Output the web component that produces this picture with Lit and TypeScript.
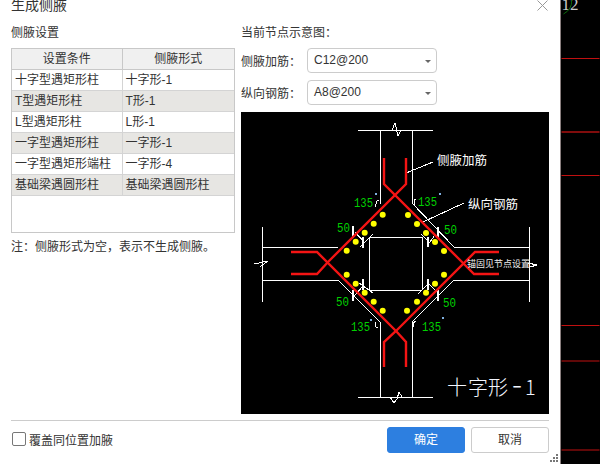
import { LitElement, html, css, svg } from "lit";
import { customElement } from "lit/decorators.js";

const rows = [
  ["十字型遇矩形柱", "十字形-1"],
  ["T型遇矩形柱", "T形-1"],
  ["L型遇矩形柱", "L形-1"],
  ["一字型遇矩形柱", "一字形-1"],
  ["一字型遇矩形端柱", "一字形-4"],
  ["基础梁遇圆形柱", "基础梁遇圆形柱"],
];

const whiteLines = [
  "358,130 433,130", "380,130 380,204", "412,130 412,203",
  "262,227 262,302", "262,247 338,247", "262,280 338,280",
  "338,280 380,322", "380,322 380,397", "358,397 433,397",
  "412,397 412,322", "412,322 454,280", "454,280 529,280",
  "529,227 529,302", "529,247 454,247", "454,247 412,203",
  "369,237 422,237", "369,237 369,290", "422,237 422,290", "369,290 422,290",
  "355,232 364,242", "360,247 373,234", "421,234 430,243", "427,246 435,235",
  "359,283 373,293", "354,296 364,285", "418,294 429,283", "427,282 437,292",
  "392,130 395,123 398,136 401,130", "390,397 394,403 397,399 399,392 402,397",
  "254,264 268,261 260,267", "262,260 262,268",
  "528,263 537,265 530,267",
  "406,173 433,162", "423,222 464,203",
  "375,207 377,201 379,200", "414,200 416,199", "414,200 414,205 416,207",
  "375,322 376,327 378,328", "413,327 413,323 416,321",
];
const thick = [
  "353,226 353,238", "363,237 363,248", "438,227 438,238", "428,237 428,247",
  "353,290 353,301", "363,279 363,290", "428,279 428,290", "438,290 438,301",
];
const red = [
  "406,158 406,184 328,262 317,274 291,274",
  "384,158 384,184 463,263 474,274 499,274",
  "291,252 317,252 396,331 406,342 406,367",
  "499,252 475,252 396,331 384,342 384,367",
];
const dots = [
  [346.7, 250.7], [355.7, 241.7], [364.7, 232.7], [373.7, 223.7], [382.7, 214.7],
  [408, 215], [417, 224], [426, 233], [435, 242], [444, 251],
  [346.7, 274.7], [355.7, 283.7], [364.7, 292.7], [373.7, 301.7], [382.7, 310.7],
  [444, 274.7], [435, 283.7], [426, 292.7], [417, 301.7], [407, 310.7],
];
const green: [number, number, string, number][] = [
  [354, 207, "135", 19], [418, 206, "135", 19], [351, 331, "135", 19], [422, 331, "135", 19],
  [337, 232, "50", 13], [444, 234, "50", 13], [336, 306, "50", 13], [443, 307, "50", 13],
];
const degs = [[375, 193], [439, 193], [370, 319], [442, 317]];

@customElement("app-root")
export class AppRoot extends LitElement {
  static styles = css`
    :host {
      display: flex;
      width: 600px;
      height: 464px;
      overflow: hidden;
      background: #000;
      font-family: "Liberation Sans", "Noto Sans CJK SC", sans-serif;
      font-size: 12px;
      color: #333;
    }
    .dialog {
      position: relative;
      width: 561px;
      height: 464px;
      box-sizing: border-box;
      padding: 0 12px 0 11px;
      background: #fff;
      border-right: 1px solid #8a7f7f;
      display: flex;
      flex-direction: column;
    }
    .title {
      height: 11px;
      line-height: 11px;
      font-size: 14px;
    }
    .close {
      position: absolute;
      left: 537px;
      top: 0;
      width: 11px;
      height: 11px;
      display: block;
    }
    .grip {
      position: absolute;
      left: 550px;
      top: 454px;
      width: 9px;
      height: 9px;
      display: block;
    }
    .main {
      display: flex;
      height: 403px;
    }
    .left {
      width: 224px;
      margin-right: 6px;
      padding-top: 16px;
    }
    .section {
      height: 12px;
      line-height: 12px;
      margin-bottom: 9px;
    }
    .tablebox {
      height: 185px;
      box-sizing: border-box;
      border: 1px solid #c8c8c8;
    }
    table {
      border-collapse: collapse;
      table-layout: fixed;
      width: 222px;
    }
    th, td {
      height: 20px;
      padding: 0 0 0 3px;
      box-sizing: border-box;
      border: 1px solid #d4d4d4;
      font-weight: 400;
      text-align: left;
      white-space: nowrap;
      overflow: hidden;
      line-height: 20px;
    }
    tr > :first-child { border-left: 0; width: 110px; }
    tr > :last-child { border-right: 0; }
    thead tr:first-child th { border-top: 0; }
    th {
      text-align: center;
      background: #f0f0f0;
      border-color: #c8c8c8;
      padding: 0;
    }
    tbody tr:nth-child(even) td { background: #e7e6e3; }
    .note {
      margin-top: 7px;
      line-height: 14px;
      white-space: nowrap;
    }
    .right {
      width: 308px;
      padding-top: 16px;
      display: flex;
      flex-direction: column;
    }
    .rlabel {
      height: 12px;
      line-height: 12px;
      margin-bottom: 9px;
    }
    .field {
      display: flex;
      align-items: center;
      height: 25px;
      margin-bottom: 7px;
    }
    .field label { width: 66px; white-space: nowrap; }
    .select {
      position: relative;
      width: 130px;
      height: 25px;
      box-sizing: border-box;
      border: 1px solid #ccc;
      border-radius: 4px;
      padding-left: 6px;
      line-height: 23px;
    }
    .caret {
      position: absolute;
      left: 117px;
      top: 11px;
      width: 0;
      height: 0;
      border-left: 3px solid transparent;
      border-right: 3px solid transparent;
      border-top: 3px solid #666;
    }
    .diagram {
      display: block;
      width: 308px;
      height: 302px;
      background: #000;
    }
    .footer {
      border-top: 1px solid #ccc;
      margin-top: 6px;
      padding-top: 6px;
      width: 538px;
      display: flex;
      align-items: center;
    }
    .check {
      width: 14px;
      height: 14px;
      box-sizing: border-box;
      border: 1px solid #777;
      border-radius: 2px;
      margin: 0 3px 2px 1px;
      background: #fff;
    }
    .checktext { margin-bottom: 2px; }
    .spacer { flex: 1; }
    .btn {
      width: 78px;
      height: 26px;
      box-sizing: border-box;
      border-radius: 3px;
      border: 1px solid #ccc;
      text-align: center;
      line-height: 24px;
      background: #fff;
      margin-left: 6px;
    }
    .primary {
      background: #2d7fe0;
      border-color: #2d7fe0;
      color: #fff;
    }
    .side {
      flex: 1;
      display: block;
      height: 464px;
    }
    .w { fill: none; stroke: #fff; stroke-width: 1; shape-rendering: crispEdges; }
    .t { fill: none; stroke: #fff; stroke-width: 2; shape-rendering: crispEdges; }
    .r { fill: none; stroke: #f41414; stroke-width: 2.4; }
    .g {
      fill: #00d000;
      font-family: "Liberation Mono", monospace;
      font-size: 12px;
    }
    .lab {
      fill: #fff;
      font-family: "Noto Sans CJK SC", sans-serif;
      font-size: 12.5px;
    }
    .sm {
      fill: #eee;
      font-family: "Noto Sans CJK SC", sans-serif;
      font-size: 9px;
    }
    .big {
      fill: #f2f6ff;
      font-family: "Noto Sans CJK SC", sans-serif;
      font-size: 20px;
      font-weight: 300;
    }
    .dash { font-size: 30px; }
    .num {
      fill: #c8c8c8;
      font-family: "Liberation Serif", serif;
      font-size: 17px;
    }
  `;

  render() {
    return html`
      <div class="dialog">
        <div class="title">生成侧腋</div>
        <svg class="close" viewBox="0 0 11 11"><path d="M.5.5l10 10M10.5.5l-10 10" stroke="#999" fill="none"/></svg>
        <div class="main">
          <div class="left">
            <div class="section">侧腋设置</div>
            <div class="tablebox">
              <table>
                <thead><tr><th>设置条件</th><th>侧腋形式</th></tr></thead>
                <tbody>
                  ${rows.map((r) => html`<tr><td>${r[0]}</td><td>${r[1]}</td></tr>`)}
                </tbody>
              </table>
            </div>
            <div class="note">注：侧腋形式为空，表示不生成侧腋。</div>
          </div>
          <div class="right">
            <div class="rlabel">当前节点示意图：</div>
            <div class="field"><label>侧腋加筋：</label><div class="select">C12@200<span class="caret"></span></div></div>
            <div class="field"><label>纵向钢筋：</label><div class="select">A8@200<span class="caret"></span></div></div>
            <svg class="diagram" viewBox="241 112 308 302">
              ${whiteLines.map((p) => svg`<polyline class="w" points=${p}></polyline>`)}
              ${thick.map((p) => svg`<polyline class="t" points=${p}></polyline>`)}
              ${red.map((p) => svg`<polyline class="r" points=${p}></polyline>`)}
              ${dots.map((d) => svg`<circle cx=${d[0]} cy=${d[1]} r="3" fill="#ffff00"></circle>`)}
              ${green.map((g) => svg`<text class="g" x=${g[0]} y=${g[1]} textLength=${g[3]} lengthAdjust="spacingAndGlyphs">${g[2]}</text>`)}
              ${degs.map((d) => svg`<rect x=${d[0]} y=${d[1]} width="2" height="2" fill="#7fb0e0"></rect>`)}
              <text class="lab" x="437" y="165">侧腋加筋</text>
              <text class="lab" x="468" y="209">纵向钢筋</text>
              <text class="sm" x="467" y="267">锚固见节点设置</text>
              <text class="big" y="395"><tspan x="447">十</tspan><tspan x="468">字</tspan><tspan x="488">形</tspan><tspan class="dash" x="512">-</tspan><tspan x="525">1</tspan></text>
            </svg>
          </div>
        </div>
        <div class="footer">
          <span class="check"></span>
          <span class="checktext">覆盖同位置加腋</span>
          <span class="spacer"></span>
          <div class="btn primary">确定</div>
          <div class="btn">取消</div>
        </div>
        <svg class="grip" viewBox="0 0 9 9" fill="#777">
          <rect x="6" y="0" width="2" height="2"></rect>
          <rect x="3" y="3" width="2" height="2"></rect>
          <rect x="6" y="3" width="2" height="2"></rect>
          <rect x="0" y="6" width="2" height="2"></rect>
          <rect x="3" y="6" width="2" height="2"></rect>
          <rect x="6" y="6" width="2" height="2"></rect>
        </svg>
      </div>
      <svg class="side" viewBox="562 0 38 464">
        <text class="num" x="562" y="10">12</text>
        <path d="M572 0q1 9-8 14" fill="none" stroke="#0a6a0a"></path>
        ${[58.5, 175.5, 325.5, 361, 450].map((y) => svg`<line x1="562" x2="600" y1=${y} y2=${y} stroke="#c01010"></line>`)}
        <line x1="562" x2="600" y1="132" y2="132" stroke="#800c0c" stroke-width="2"></line>
      </svg>
    `;
  }
}
